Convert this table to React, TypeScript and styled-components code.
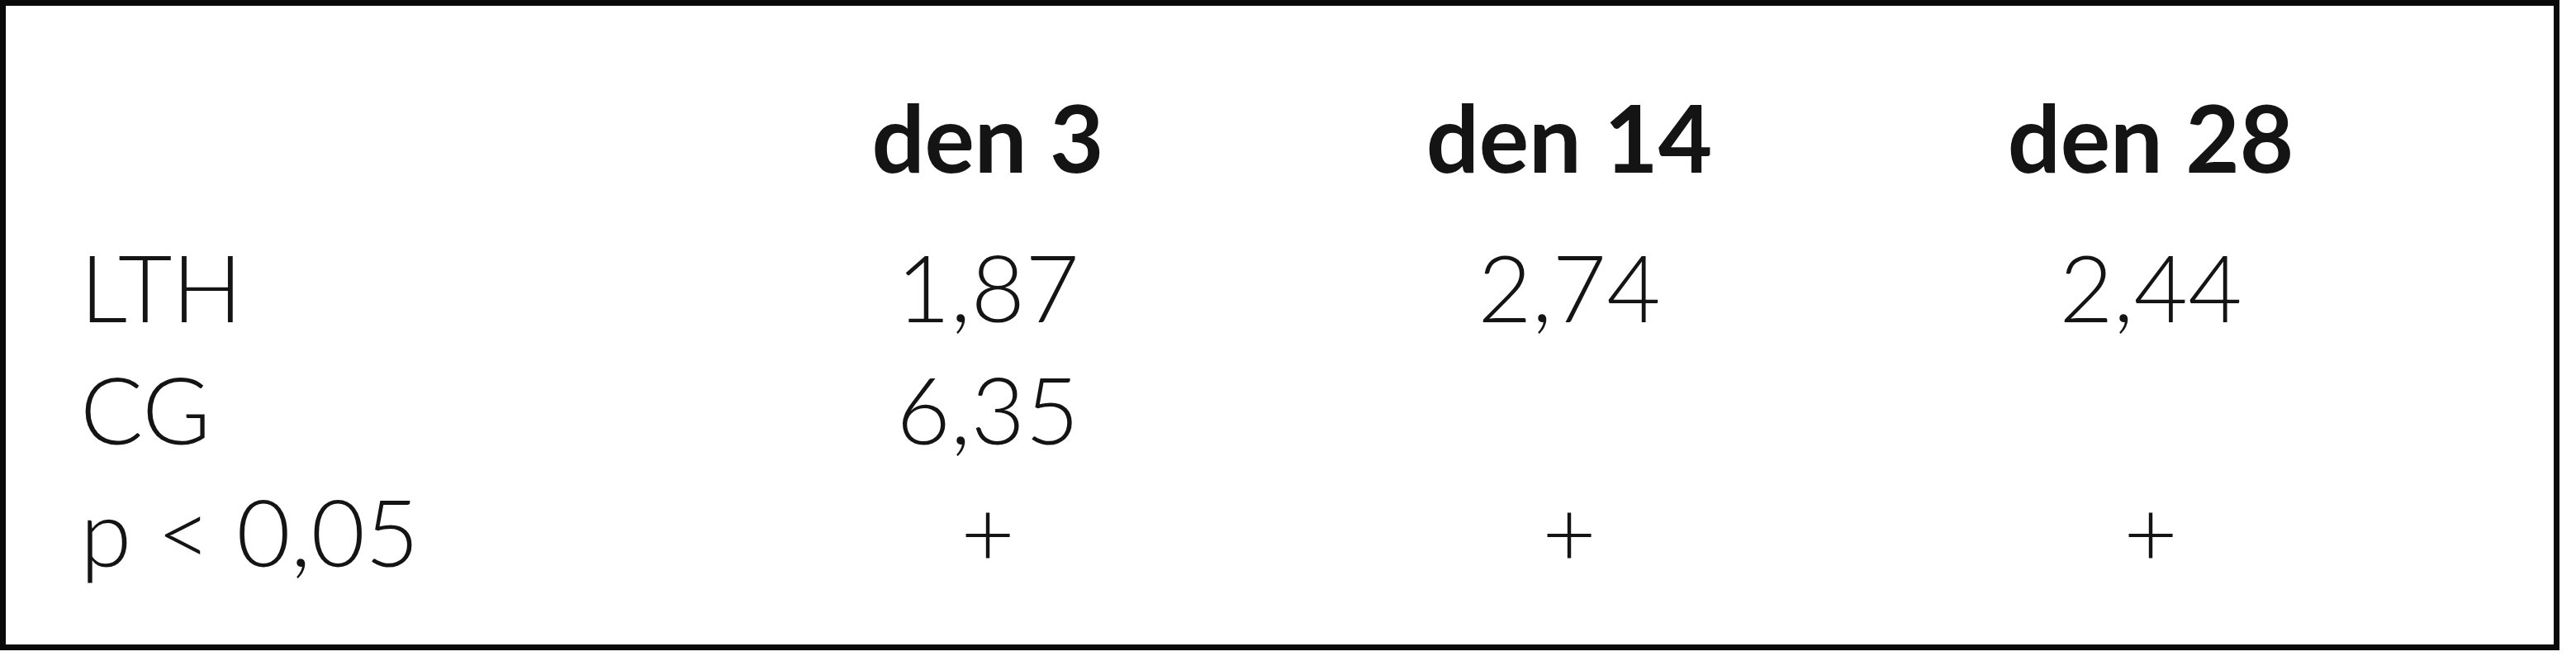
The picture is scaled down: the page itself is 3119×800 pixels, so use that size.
import React from 'react';
import styled, { createGlobalStyle } from 'styled-components';

const GlobalStyle = createGlobalStyle`
  html, body {
    margin: 0;
    padding: 0;
    background: #ffffff;
  }
  body {
    font-family: 'Lato', 'Open Sans', sans-serif;
    color: #141414;
  }
`;

const TableBox = styled.div`
  box-sizing: border-box;
  width: 3099px;
  height: 787px;
  border: 7px solid #0a0a0a;
  background: #ffffff;
  padding: 84px 0 0 0;
  display: flex;
  flex-direction: column;
`;

const Row = styled.div<{ $header?: boolean }>`
  display: grid;
  grid-template-columns: 837px repeat(3, 704px) 1fr;
  height: 148px;
  line-height: 148px;
  font-size: 113px;
  font-weight: ${({ $header }) => ($header ? 700 : 300)};
  margin-bottom: ${({ $header }) => ($header ? '33px' : '0')};
`;

const LabelCell = styled.div`
  padding-left: 90px;
  white-space: nowrap;
`;

const ValueCell = styled.div`
  text-align: center;
  white-space: nowrap;
`;

const header = ['den 3', 'den 14', 'den 28'];

const rows: { label: string; values: string[] }[] = [
  { label: 'LTH', values: ['1,87', '2,74', '2,44'] },
  { label: 'CG', values: ['6,35', '', ''] },
  { label: 'p < 0,05', values: ['+', '+', '+'] },
];

export default function App() {
  return (
    <>
      <GlobalStyle />
      <TableBox>
        <Row $header>
          <LabelCell />
          {header.map((h) => (
            <ValueCell key={h}>{h}</ValueCell>
          ))}
        </Row>
        {rows.map((row) => (
          <Row key={row.label}>
            <LabelCell>{row.label}</LabelCell>
            {row.values.map((v, i) => (
              <ValueCell key={i}>{v}</ValueCell>
            ))}
          </Row>
        ))}
      </TableBox>
    </>
  );
}
